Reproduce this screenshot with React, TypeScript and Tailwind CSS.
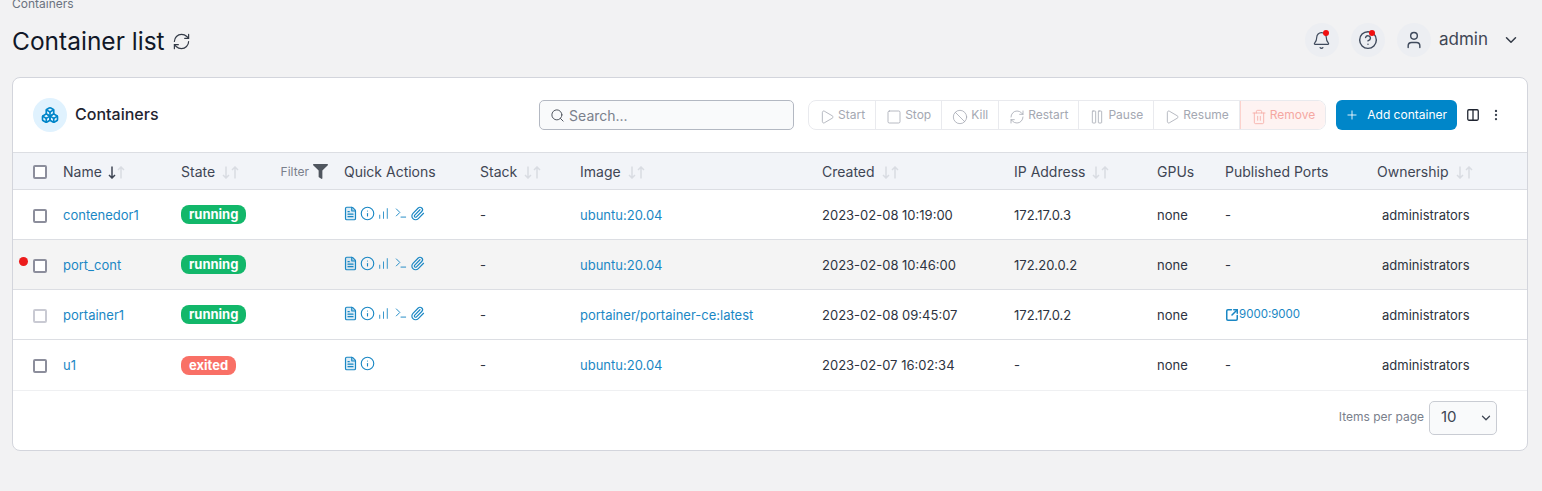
import React from "react";
import { Ban, Bell, Boxes, ChartNoAxesColumnIncreasing, ChevronDown, CircleHelp, Columns2, EllipsisVertical, FileText, Info, Paperclip, Pause, Play, Plus, RefreshCw, Search, Square, SquareArrowOutUpRight, Terminal, Trash2, User } from "lucide-react";
import { FaFilter } from "react-icons/fa";

const rows = [
  { name: "contenedor1", state: "running", image: "ubuntu:20.04", created: "2023-02-08 10:19:00", ip: "172.17.0.3", port: "-", h: "h-[50px]" },
  { name: "port_cont", state: "running", image: "ubuntu:20.04", created: "2023-02-08 10:46:00", ip: "172.20.0.2", port: "-", dot: true, bg: "bg-[#f4f4f4]", h: "h-[50px]" },
  { name: "portainer1", state: "running", image: "portainer/portainer-ce:latest", created: "2023-02-08 09:45:07", ip: "172.17.0.2", port: "9000:9000", faint: true, h: "h-[50px]" },
  { name: "u1", state: "exited", image: "ubuntu:20.04", created: "2023-02-07 16:02:34", ip: "-", port: "-", h: "h-[51px]" },
];

function Sort({ active }: { active?: boolean }) {
  return (
    <span className={`${active ? "ml-[6px]" : "ml-[7px]"} inline-flex gap-[1px] align-[-2px]`}>
      <svg width="8" height="13" viewBox="0 0 8 13" fill="none" stroke="currentColor" strokeWidth="1.5" className={active ? "text-[#3f4654]" : "text-[#d9dce2]"}>
        <path d="M4 .5v11.5M1 9l3 3 3-3" />
      </svg>
      <svg width="8" height="13" viewBox="0 0 8 13" fill="none" stroke="currentColor" strokeWidth="1.5" className="text-[#d9dce2]">
        <path d="M4 12.5V1M1 4l3-3 3 3" />
      </svg>
    </span>
  );
}

function Check({ faint }: { faint?: boolean }) {
  return <span className={`mt-[2px] block h-[14px] w-[14px] rounded-[2px] border-2 bg-white ${faint ? "border-[#c9cad3]" : "border-[#8c8e9c]"}`} />;
}

function Th({ children, className = "" }: { children: React.ReactNode; className?: string }) {
  return <th className={`whitespace-nowrap p-0 text-left text-[14px] font-normal text-[#3f4654] ${className}`}>{children}</th>;
}

function Act({ icon, label, cls = "" }: { icon: React.ReactNode; label: string; cls?: string }) {
  return (
    <span className={`flex h-full items-center gap-[3px] border-r border-[#e9eaee] px-[10px] text-[12px] text-[#a4a8b2] ${cls}`}>
      <span className="mt-[3px] flex">{icon}</span>
      {label}
    </span>
  );
}

function Round({ children, dot }: { children: React.ReactNode; dot?: boolean }) {
  return (
    <span className="relative flex h-[34px] w-[34px] items-center justify-center rounded-full bg-[#eceef2] text-[#3f4a5c]">
      {children}
      {dot && <span className="absolute left-[18px] top-[7px] h-[6px] w-[6px] rounded-full bg-[#f00f0f]" />}
    </span>
  );
}

export default function App() {
  return (
    <div className="h-[491px] overflow-hidden bg-[#f2f2f3] text-[13px] text-[#2d3340] [font-family:Inter,'Liberation_Sans',sans-serif]">
      <div className="-mt-[6px] px-3 text-[12px] leading-[20px] text-[#6b7280]">Containers</div>
      <div className="mt-[6px] flex h-[40px] items-center justify-between pr-[22px]">
        <div className="flex items-center gap-[7px] px-3">
          <h1 className="mt-[2px] text-[24.5px] font-normal leading-[32px] text-[#111827]">Container list</h1>
          <RefreshCw size={19} strokeWidth={1.5} className="mt-[2px] text-[#333a46]" />
        </div>
        <div className="flex items-center">
          <Round dot><Bell size={19} strokeWidth={1.5} /></Round>
          <span className="w-3" />
          <Round dot><CircleHelp size={20} strokeWidth={1.7} /></Round>
          <span className="w-3" />
          <Round><User size={20} strokeWidth={1.7} /></Round>
          <span className="ml-[8px] text-[17px] text-[#3f4654]">admin</span>
          <ChevronDown size={18} strokeWidth={2} className="ml-[14px] text-[#333a46]" />
        </div>
      </div>
      <div className="ml-3 mr-[14px] mt-[17px] overflow-hidden rounded-[8px] border border-[#d3d5dc] bg-white">
        <div className="flex h-[74px] items-center px-[20px]">
          <span className="flex h-[34px] w-[34px] items-center justify-center rounded-full bg-[#e0f2fe] text-[#0086c9]">
            <Boxes size={18} strokeWidth={2.2} />
          </span>
          <span className="-mt-[2px] ml-[8px] text-[16px] font-medium text-[#1f2430]">Containers</span>
          <div className="ml-auto flex h-[30px] w-[255px] items-center gap-[4px] rounded-[5px] border border-[#b3b8c2] bg-[#f9fafb] px-[10px] text-[14px] text-[#7a808c]">
            <Search size={15} strokeWidth={1.6} className="text-[#50565f]" />
            Search...
          </div>
          <div className="ml-[14px] flex h-[30px] items-center overflow-hidden rounded-[8px] border border-[#e9eaee]">
            <Act icon={<Play size={16} strokeWidth={1.2} />} label="Start" />
            <Act icon={<Square size={16} strokeWidth={1.2} />} label="Stop" />
            <Act icon={<Ban size={16} strokeWidth={1.2} />} label="Kill" />
            <Act icon={<RefreshCw size={16} strokeWidth={1.2} />} label="Restart" />
            <Act icon={<Pause size={16} strokeWidth={1.2} />} label="Pause" />
            <Act icon={<Play size={16} strokeWidth={1.2} />} label="Resume" />
            <Act cls="border-r-0 border-l border-l-[#fcd2cd] bg-[#fef3f2] !text-[#f5a8a2]" icon={<Trash2 size={16} strokeWidth={1.2} />} label="Remove" />
          </div>
          <button className="ml-[10px] flex h-[30px] items-center gap-[8px] rounded-[6px] bg-[#0086c9] pl-[9px] pr-[10px] text-[12px] text-white">
            <Plus size={14} strokeWidth={1.5} />
            Add container
          </button>
          <Columns2 size={14} strokeWidth={2.2} className="ml-[9px] text-[#1f2430]" />
          <EllipsisVertical size={14} strokeWidth={2} className="ml-[9px] mr-[4px] text-[#3f4654]" />
        </div>
        <table className="w-full table-fixed border-collapse">
          <colgroup>
            <col className="w-[50px]" /><col className="w-[118px]" /><col className="w-[163px]" /><col className="w-[136px]" /><col className="w-[100px]" />
            <col className="w-[242px]" /><col className="w-[192px]" /><col className="w-[143px]" /><col className="w-[68px]" /><col className="w-[152px]" /><col />
          </colgroup>
          <thead>
            <tr className="h-[37px] border-y border-[#dcdee3] bg-[#f2f4f8]">
              <Th className="pl-[20px]"><Check /></Th>
              <Th>Name<Sort active /></Th>
              <Th>
                <div className="flex items-center justify-between pr-[16px]">
                  <span>State<Sort /></span>
                  <span className="flex items-center gap-[4px] text-[12px] text-[#7a808c]"><span className="mt-[2px]">Filter</span><FaFilter size={15} className="text-[#50565f]" /></span>
                </div>
              </Th>
              <Th>Quick Actions</Th>
              <Th>Stack<Sort /></Th>
              <Th>Image<Sort /></Th>
              <Th>Created<Sort /></Th>
              <Th>IP Address<Sort /></Th>
              <Th>GPUs</Th>
              <Th>Published Ports</Th>
              <Th>Ownership<Sort /></Th>
            </tr>
          </thead>
          <tbody>
            {rows.map((r) => (
              <tr key={r.name} className={`${r.h} border-b ${r.name === "u1" ? "border-[#eff0f2]" : "border-[#dcdee3]"} ${r.bg ?? ""}`}>
                <td className="relative pl-[20px]">
                  {r.dot && <span className="absolute left-[6px] top-[17px] h-[9px] w-[9px] rounded-full bg-[#ec1c1c]" />}
                  <Check faint={r.faint} />
                </td>
                <td className="pt-[2px] text-[#1a87c4]">{r.name}</td>
                <td>
                  <span className="inline-block align-middle">
                    <span className={`block rounded-[8px] px-[8px] text-[13px] font-bold leading-[19px] text-white ${r.state === "running" ? "bg-[#12b76a]" : "bg-[#f97066]"}`}>{r.state}</span>
                  </span>
                </td>
                <td>
                  <div className="-ml-[1px] -mt-[3px] flex items-center gap-[1.7px] text-[#1a87c4]">
                    <FileText size={15} strokeWidth={1.9} fill="#1a87c4" fillOpacity={0.15} />
                    <Info size={15} strokeWidth={1.8} />
                    {r.state === "running" && (
                      <>
                        <span className="flex h-[15px] w-[15px] items-center justify-center"><ChartNoAxesColumnIncreasing size={13} strokeWidth={1.6} /></span>
                        <span className="flex h-[15px] w-[15px] items-center justify-center"><Terminal size={14} strokeWidth={1.6} /></span>
                        <Paperclip size={15} strokeWidth={1.9} />
                      </>
                    )}
                  </div>
                </td>
                <td className="pt-[2px]">-</td>
                <td className="pt-[2px] text-[#1a87c4]">{r.image}</td>
                <td className="pt-[2px]">{r.created}</td>
                <td className="pt-[2px]">{r.ip}</td>
                <td className="pt-[2px]">none</td>
                <td className="pt-[2px]">
                  {r.port === "-" ? "-" : (
                    <span className="-mt-[2px] flex items-center text-[11.5px] text-[#1a87c4]">
                      <SquareArrowOutUpRight size={14} strokeWidth={2.6} />
                      {r.port}
                    </span>
                  )}
                </td>
                <td className="pl-[5px] pt-[2px]">administrators</td>
              </tr>
            ))}
          </tbody>
        </table>
        <div className="flex h-[59px] items-center justify-end gap-[5px] pb-[6px] pr-[30px] text-[12px] text-[#7a808c]">
          <span className="-mt-[2px]">Items per page</span>
          <span className="flex h-[34px] w-[68px] items-center justify-between rounded-[5px] border border-[#c9ccd3] bg-[#f9fafb] pl-[11px] pr-[3px] text-[15px] text-[#3f4654]">
            10
            <ChevronDown size={14} strokeWidth={2.2} className="text-[#3f4654]" />
          </span>
        </div>
      </div>
    </div>
  );
}
